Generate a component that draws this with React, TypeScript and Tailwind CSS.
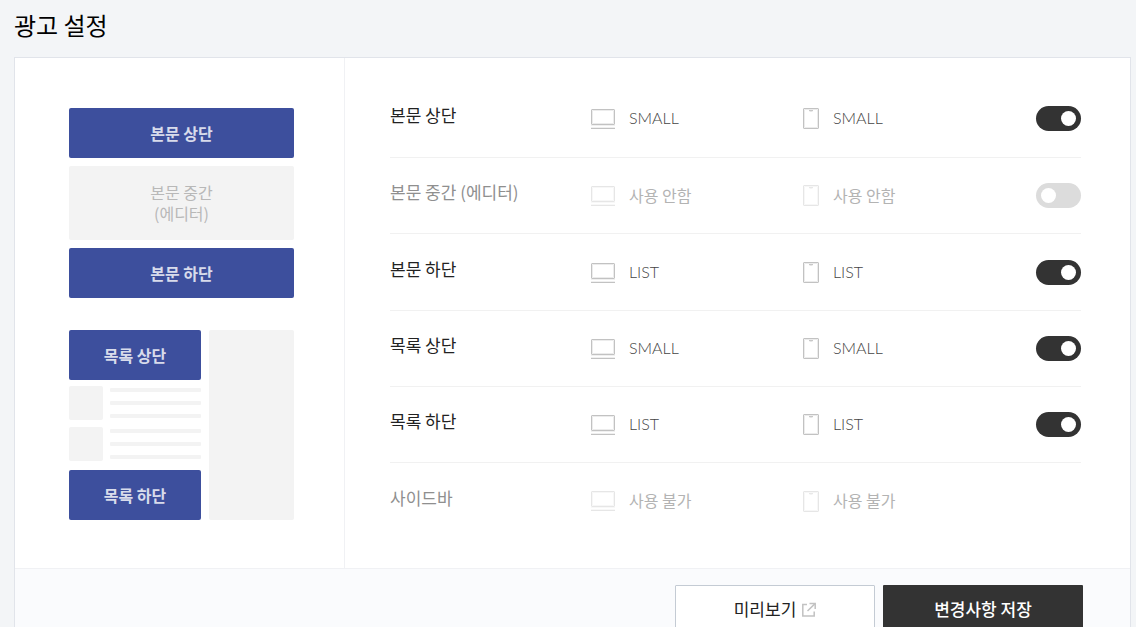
import { useState } from "react";

type Slot = {
  id: string;
  label: string;
  desktop: string;
  mobile: string;
  enabled: boolean;
  switchable: boolean;
};

const initialSlots: Slot[] = [
  { id: "body-top", label: "본문 상단", desktop: "SMALL", mobile: "SMALL", enabled: true, switchable: true },
  { id: "body-middle", label: "본문 중간 (에디터)", desktop: "사용 안함", mobile: "사용 안함", enabled: false, switchable: true },
  { id: "body-bottom", label: "본문 하단", desktop: "LIST", mobile: "LIST", enabled: true, switchable: true },
  { id: "list-top", label: "목록 상단", desktop: "SMALL", mobile: "SMALL", enabled: true, switchable: true },
  { id: "list-bottom", label: "목록 하단", desktop: "LIST", mobile: "LIST", enabled: true, switchable: true },
  { id: "sidebar", label: "사이드바", desktop: "사용 불가", mobile: "사용 불가", enabled: false, switchable: false },
];

function DesktopIcon() {
  return (
    <svg width="24" height="20" viewBox="0 0 24 20" fill="none" aria-hidden="true" className="shrink-0">
      <path d="M1.5 1.5h21v13h-21z" stroke="#ececec" />
      <rect x="0.5" y="0.5" width="23" height="15" rx="0.5" stroke="#c2c2c2" />
      <path d="M0 16.5h24" stroke="#f0f0f0" />
      <path d="M0 18.5h24" stroke="#f0f0f0" />
      <path d="M0 19.5h24" stroke="#c2c2c2" />
    </svg>
  );
}

function MobileIcon() {
  return (
    <svg width="16" height="21" viewBox="0 0 16 21" fill="none" aria-hidden="true" className="shrink-0">
      <path d="M1.5 1.5h13v18h-13z" stroke="#ececec" />
      <rect x="0.5" y="0.5" width="15" height="20" rx="0.5" stroke="#c2c2c2" />
      <path d="M6 2.5h4" stroke="#c8c8c8" />
      <path d="M6.5 3.5h3" stroke="#e6e6e6" />
    </svg>
  );
}

function ExternalIcon() {
  return (
    <svg width="14" height="15" viewBox="0 0 14 15" fill="none" stroke="#c2c2c2" aria-hidden="true">
      <path d="M5 2.5H.8v11.4H12.2V9.5" strokeWidth="1.5" />
      <path d="M7.5 1.4h5.7V7" strokeWidth="1.5" />
      <path d="M13 1.6 5.5 9" strokeWidth="1.5" />
    </svg>
  );
}

function Block({ children }: { children: string }) {
  return (
    <button
      type="button"
      className="h-[50px] w-full rounded-[2px] bg-[#3d4f9d] text-base leading-5 font-bold text-[#d8dbeb]"
    >
      {children}
    </button>
  );
}

function PostLines() {
  return (
    <div className="flex gap-[7px]">
      <div className="size-[34px] rounded-[2px] bg-[#f3f3f3]" />
      <div className="flex flex-1 flex-col justify-between py-[2px]">
        <div className="h-1 rounded-[1px] bg-[#f3f3f3]" />
        <div className="h-1 rounded-[1px] bg-[#f3f3f3]" />
        <div className="h-1 rounded-[1px] bg-[#f3f3f3]" />
      </div>
    </div>
  );
}

function LayoutPreview() {
  return (
    <div className="w-[330px] shrink-0 border-r border-[#f0f1f4] pt-[50px] pr-[50px] pb-12 pl-[54px]">
      <div className="flex flex-col gap-2">
        <Block>본문 상단</Block>
        <button
          type="button"
          className="h-[74px] w-full rounded-[2px] bg-[#f3f3f3] text-base leading-[21px] text-[#b8b8b8]"
        >
          본문 중간
          <br />
          (에디터)
        </button>
        <Block>본문 하단</Block>
      </div>
      <div className="mt-8 flex gap-2">
        <div className="flex w-[132px] flex-col">
          <Block>목록 상단</Block>
          <div className="flex flex-col gap-[7px] pt-[6px] pb-[9px]">
            <PostLines />
            <PostLines />
          </div>
          <Block>목록 하단</Block>
        </div>
        <div className="flex-1 rounded-[2px] bg-[#f3f3f3]" />
      </div>
    </div>
  );
}

function SlotRow({ slot, onToggle }: { slot: Slot; onToggle: () => void }) {
  const dim = slot.enabled ? "" : "opacity-40";
  const valueStyle = slot.enabled
    ? "font-['Lato','Noto_Sans_CJK_KR',sans-serif] font-light text-[#444]"
    : "text-[#b3b3b3]";
  return (
    <li className="grid h-[76px] grid-cols-[200px_212px_1fr_45px] items-center border-b border-[#f1f1f1] first:pb-[2px] last:border-0 nth-3:h-[77px] nth-3:pt-px">
      <label
        htmlFor={slot.switchable ? slot.id : undefined}
        className={`pb-[7px] text-[17px] leading-6 ${slot.enabled ? "text-[#222]" : "text-[#8f8f8f]"}`}
      >
        {slot.label}
      </label>
      <div className="flex items-center gap-[14px] pl-px">
        <span className={dim}>
          <DesktopIcon />
        </span>
        <span className={`pb-[2px] text-base leading-6 ${valueStyle}`}>{slot.desktop}</span>
      </div>
      <div className="flex items-center gap-[14px] pl-px">
        <span className={dim}>
          <MobileIcon />
        </span>
        <span className={`pb-[2px] text-base leading-6 ${valueStyle}`}>{slot.mobile}</span>
      </div>
      {slot.switchable && (
        <input
          id={slot.id}
          type="checkbox"
          role="switch"
          checked={slot.enabled}
          onChange={onToggle}
          className="flex h-[25px] w-[45px] cursor-pointer appearance-none items-center rounded-full bg-[#dcdcdc] px-[5px] before:size-[15px] before:rounded-full before:bg-white checked:justify-end checked:bg-[#333]"
        />
      )}
    </li>
  );
}

export default function App() {
  const [slots, setSlots] = useState(initialSlots);
  const toggle = (id: string) =>
    setSlots((all) => all.map((s) => (s.id === id ? { ...s, enabled: !s.enabled } : s)));

  return (
    <main className="min-h-screen bg-[#f3f5f7] pr-[5px] pb-10 pl-[14px] font-['Noto_Sans_CJK_KR',sans-serif]">
      <h1 className="pt-[7px] pb-[14px] text-2xl leading-9 text-black">광고 설정</h1>
      <form className="border border-[#e1e4ea] bg-white" onSubmit={(e) => e.preventDefault()}>
        <div className="flex">
          <LayoutPreview />
          <ul className="flex-1 pt-6 pr-[49px] pb-6 pl-[45px]">
            {slots.map((slot) => (
              <SlotRow key={slot.id} slot={slot} onToggle={() => toggle(slot.id)} />
            ))}
          </ul>
        </div>
        <div className="flex justify-end gap-2 border-t border-[#f0f1f4] bg-[#fafbfd] py-4 pr-[47px] pl-4">
          <button
            type="button"
            className="flex h-12 w-[200px] items-center justify-center gap-[6px] rounded-[1px] border border-[#c4cbd4] bg-white text-[17px] leading-6 text-[#222]"
          >
            미리보기
            <ExternalIcon />
          </button>
          <button
            type="submit"
            className="h-12 w-[200px] rounded-[1px] bg-[#333] text-[17px] leading-6 font-medium text-white"
          >
            변경사항 저장
          </button>
        </div>
      </form>
    </main>
  );
}
